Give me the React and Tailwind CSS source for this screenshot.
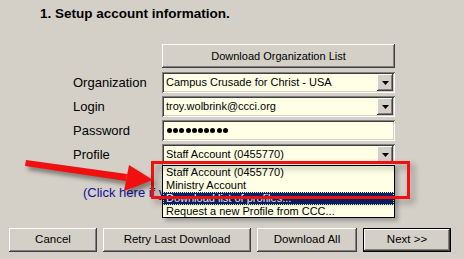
const raised =
  'shadow-[inset_-1px_-1px_#404040,inset_1px_1px_#ffffff,inset_-2px_-2px_#808080,inset_2px_2px_#d4d0c8]'
const sunken =
  'shadow-[inset_1px_1px_#808080,inset_-1px_-1px_#ffffff,inset_2px_2px_#404040,inset_-2px_-2px_#d4d0c8]'

function DropButton() {
  return (
    <div className={`w-[16px] h-[17px] bg-[#d4d0c8] flex items-center justify-center ${raised}`}>
      <svg width="7" height="4" viewBox="0 0 7 4">
        <path d="M0 0h7L3.5 4z" fill="#000" />
      </svg>
    </div>
  )
}

function Field({ children, combo }) {
  return (
    <div className={`w-[233px] h-[21px] bg-[#ffffe6] flex items-center pl-[4px] pr-[2px] ${sunken}`}>
      <div className="flex-1 flex items-center text-[11px] text-black leading-none">{children}</div>
      {combo && <DropButton />}
    </div>
  )
}

function Row({ label, children }) {
  return (
    <div className="flex items-center">
      <div className="w-[89px] text-[13px] text-black">{label}</div>
      {children}
    </div>
  )
}

function Button({ children, w, isDefault }) {
  const face = (
    <div className={`h-full w-full bg-[#d4d0c8] flex items-center justify-center text-[11.5px] text-black ${raised}`}>
      {children}
    </div>
  )
  return (
    <div className={`${w} h-[24px] ${isDefault ? 'border border-black' : ''}`}>{face}</div>
  )
}

export default function App() {
  return (
    <div
      className="relative w-[464px] h-[259px] bg-[#d4d0c8] overflow-hidden"
      style={{ fontFamily: '"Liberation Sans", Arial, sans-serif' }}
    >
      <div className="pl-[40px] pt-[4px] h-[44px] text-[13.5px] font-bold text-black">
        1. Setup account information.
      </div>

      <div className="pl-[73px] flex flex-col gap-[3px]">
        <div className="pl-[89px] pb-[1px]">
          <div className={`w-[233px] h-[24px] bg-[#d4d0c8] flex items-center justify-center text-[11px] text-black ${raised}`}>
            Download Organization List
          </div>
        </div>
        <Row label="Organization">
          <Field combo>Campus Crusade for Christ - USA</Field>
        </Row>
        <Row label="Login">
          <Field combo>troy.wolbrink@ccci.org</Field>
        </Row>
        <Row label="Password">
          <Field>
            <div className="flex gap-[1.2px] pl-[1px]">
              {Array.from({ length: 10 }).map((_, i) => (
                <div key={i} className="w-[5px] h-[5px] rounded-full bg-black" />
              ))}
            </div>
          </Field>
        </Row>
        <Row label="Profile">
          <Field combo>Staff Account (0455770)</Field>
        </Row>
      </div>

      <div className="pl-[83px] pt-[18px] h-[63px] text-[13px] text-[#10109a]">
        (Click here if you need help)
      </div>

      <div className="pl-[9px] flex gap-[6px]">
        <Button w="w-[88px]">Cancel</Button>
        <Button w="w-[148px]">Retry Last Download</Button>
        <Button w="w-[100px]">Download All</Button>
        <Button w="w-[88px]" isDefault>Next &gt;&gt;</Button>
      </div>

      {/* open profile list */}
      <div className="absolute left-[162px] top-[165px] w-[233px] h-[53px] border border-black bg-[#ffffe6] text-[11px] text-black leading-[13px] shadow-[3px_3px_4px_rgba(0,0,0,0.25)]">
        <div className="h-[13px] px-[3px]">Staff Account (0455770)</div>
        <div className="h-[13px] px-[3px]">Ministry Account</div>
        <div className="h-[13px] px-[2px] bg-[#0a246a] text-white border border-dotted border-[#f0e8a0] leading-[11px]">
          Download list of profiles...
        </div>
        <div className="h-[13px] px-[3px]">Request a new Profile from CCC...</div>
      </div>

      {/* red highlight box */}
      <div className="absolute left-[151px] top-[161px] w-[259px] h-[38px] border-[3px] border-[#f01010] [filter:drop-shadow(4px_4px_3px_rgba(0,0,0,0.35))]" />

      {/* red arrow */}
      <svg
        className="absolute left-0 top-0 [filter:drop-shadow(3px_4px_2px_rgba(0,0,0,0.4))]"
        width="464"
        height="259"
        viewBox="0 0 464 259"
      >
        <path d="M26 160 L127 174 L126 181 L25 166 Z" fill="#f01010" />
        <path d="M129 165 L153 180 L124 191 Z" fill="#f01010" />
      </svg>
    </div>
  )
}
